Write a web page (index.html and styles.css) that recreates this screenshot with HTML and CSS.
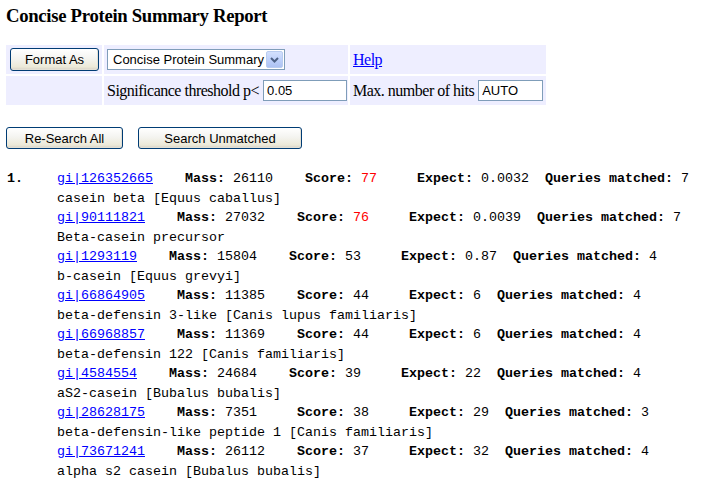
FILE: index.html
```html
<!DOCTYPE html>
<html>
<head>
<meta charset="utf-8">
<title>Concise Protein Summary Report</title>
<link rel="stylesheet" href="styles.css">
</head>
<body>
<h3 class="title">Concise Protein Summary Report</h3>

<div class="form">
  <div class="cell c1"><button class="btn btn-format">Format As</button></div>
  <div class="cell c2">
    <div class="select">
      <span class="select-text">Concise Protein Summary</span>
      <span class="select-arrow"><svg width="9" height="6" viewBox="0 0 9 6"><path d="M1 1 L4.5 4.5 L8 1" fill="none" stroke="#4d6185" stroke-width="2"/></svg></span>
    </div>
  </div>
  <div class="cell c3"><a href="#" class="link">Help</a></div>
  <div class="cell c1"></div>
  <div class="cell c2"><span class="label">Significance threshold p&lt;</span><input class="field f-sig" type="text" value="0.05"></div>
  <div class="cell c3"><span class="label">Max. number of hits</span><input class="field f-max" type="text" value="AUTO"></div>
</div>

<div class="actions">
  <button class="btn btn-research">Re-Search All</button>
  <button class="btn btn-unmatched">Search Unmatched</button>
</div>

<div class="hits">
  <b class="num">1.</b>
  <div class="lines">
    <div class="line"><a href="#">gi|126352665</a>    <b>Mass:</b> 26110    <b>Score:</b> <span class="hi">77</span>     <b>Expect:</b> 0.0032  <b>Queries matched:</b> 7</div>
    <div class="line">casein beta [Equus caballus]</div>
    <div class="line"><a href="#">gi|90111821</a>    <b>Mass:</b> 27032    <b>Score:</b> <span class="hi">76</span>     <b>Expect:</b> 0.0039  <b>Queries matched:</b> 7</div>
    <div class="line">Beta-casein precursor</div>
    <div class="line"><a href="#">gi|1293119</a>    <b>Mass:</b> 15804    <b>Score:</b> 53     <b>Expect:</b> 0.87  <b>Queries matched:</b> 4</div>
    <div class="line">b-casein [Equus grevyi]</div>
    <div class="line"><a href="#">gi|66864905</a>    <b>Mass:</b> 11385    <b>Score:</b> 44     <b>Expect:</b> 6  <b>Queries matched:</b> 4</div>
    <div class="line">beta-defensin 3-like [Canis lupus familiaris]</div>
    <div class="line"><a href="#">gi|66968857</a>    <b>Mass:</b> 11369    <b>Score:</b> 44     <b>Expect:</b> 6  <b>Queries matched:</b> 4</div>
    <div class="line">beta-defensin 122 [Canis familiaris]</div>
    <div class="line"><a href="#">gi|4584554</a>    <b>Mass:</b> 24684    <b>Score:</b> 39     <b>Expect:</b> 22  <b>Queries matched:</b> 4</div>
    <div class="line">aS2-casein [Bubalus bubalis]</div>
    <div class="line"><a href="#">gi|28628175</a>    <b>Mass:</b> 7351     <b>Score:</b> 38     <b>Expect:</b> 29  <b>Queries matched:</b> 3</div>
    <div class="line">beta-defensin-like peptide 1 [Canis familiaris]</div>
    <div class="line"><a href="#">gi|73671241</a>    <b>Mass:</b> 26112    <b>Score:</b> 37     <b>Expect:</b> 32  <b>Queries matched:</b> 4</div>
    <div class="line">alpha s2 casein [Bubalus bubalis]</div>
  </div>
</div>
</body>
</html>
```

FILE: styles.css
```css
html, body {
  margin: 0;
  padding: 0;
  background: #ffffff;
}

body {
  padding-left: 6px;
  font-family: "Liberation Serif", "Times New Roman", serif;
  font-size: 16px;
  letter-spacing: -0.5px;
  color: #000000;
}

.title {
  margin: 0;
  padding-top: 5px;
  font-size: 18.72px;
  line-height: 22px;
  font-weight: bold;
  letter-spacing: -0.3px;
}

.form {
  display: grid;
  grid-template-columns: 96px 244px 196px;
  grid-template-rows: 29px 29px;
  gap: 2px;
  width: max-content;
  margin-top: 18px;
}

.cell {
  background: #eeeeff;
  display: flex;
  align-items: center;
  white-space: nowrap;
}

.c1 { padding-left: 4px; }
.c2 { padding-left: 3px; }
.c3 { padding-left: 3px; }

.btn {
  font-family: "Liberation Sans", Arial, sans-serif;
  font-size: 13px;
  letter-spacing: 0;
  color: #000000;
  height: 23px;
  padding: 0;
  border: 1px solid #003c74;
  border-radius: 3px;
  background: linear-gradient(to bottom, #ffffff 0%, #f4f4f0 45%, #ece9d8 85%, #d6d0c5 100%);
  box-shadow: inset -1px -1px 0 #e3e0d5;
  cursor: pointer;
}

.btn-format { width: 89px; }
.btn-research { width: 117px; height: 22px; }
.btn-unmatched { width: 164px; height: 22px; }

.select {
  box-sizing: border-box;
  width: 178px;
  height: 21px;
  border: 1px solid #7f9db9;
  background: #ffffff;
  display: flex;
  align-items: center;
  justify-content: space-between;
  padding: 1px 1px 1px 5px;
  font-family: "Liberation Sans", Arial, sans-serif;
  font-size: 13px;
  letter-spacing: 0;
}

.select-arrow {
  box-sizing: border-box;
  width: 17px;
  height: 17px;
  border: 1px solid #b9ccf0;
  border-radius: 2px;
  background: linear-gradient(to bottom, #d3e0fd 0%, #bfd1fa 50%, #adc2f2 100%);
  display: flex;
  align-items: center;
  justify-content: center;
}

.link {
  color: #0000ff;
  text-decoration: underline;
}

.label {
  margin-right: 4px;
}

.field {
  box-sizing: border-box;
  height: 21px;
  border: 1px solid #7f9db9;
  padding: 0 3px;
  margin: 0;
  font-family: "Liberation Sans", Arial, sans-serif;
  font-size: 13px;
  letter-spacing: 0;
  color: #000000;
  background: #ffffff;
}

.f-sig { width: 84px; }
.f-max { width: 65px; }

.actions {
  display: flex;
  gap: 15px;
  margin-top: 22px;
}

.hits {
  display: grid;
  grid-template-columns: 51px auto;
  align-items: start;
  margin-top: 20px;
  font-family: "Liberation Mono", "Courier New", monospace;
  font-size: 13.333px;
  line-height: 19.5px;
  letter-spacing: 0;
}

.num {
  padding-left: 1px;
}

.line {
  white-space: pre;
}

.line a {
  color: #0000ff;
  text-decoration: underline;
}

.hi {
  color: #ff0000;
}
```
